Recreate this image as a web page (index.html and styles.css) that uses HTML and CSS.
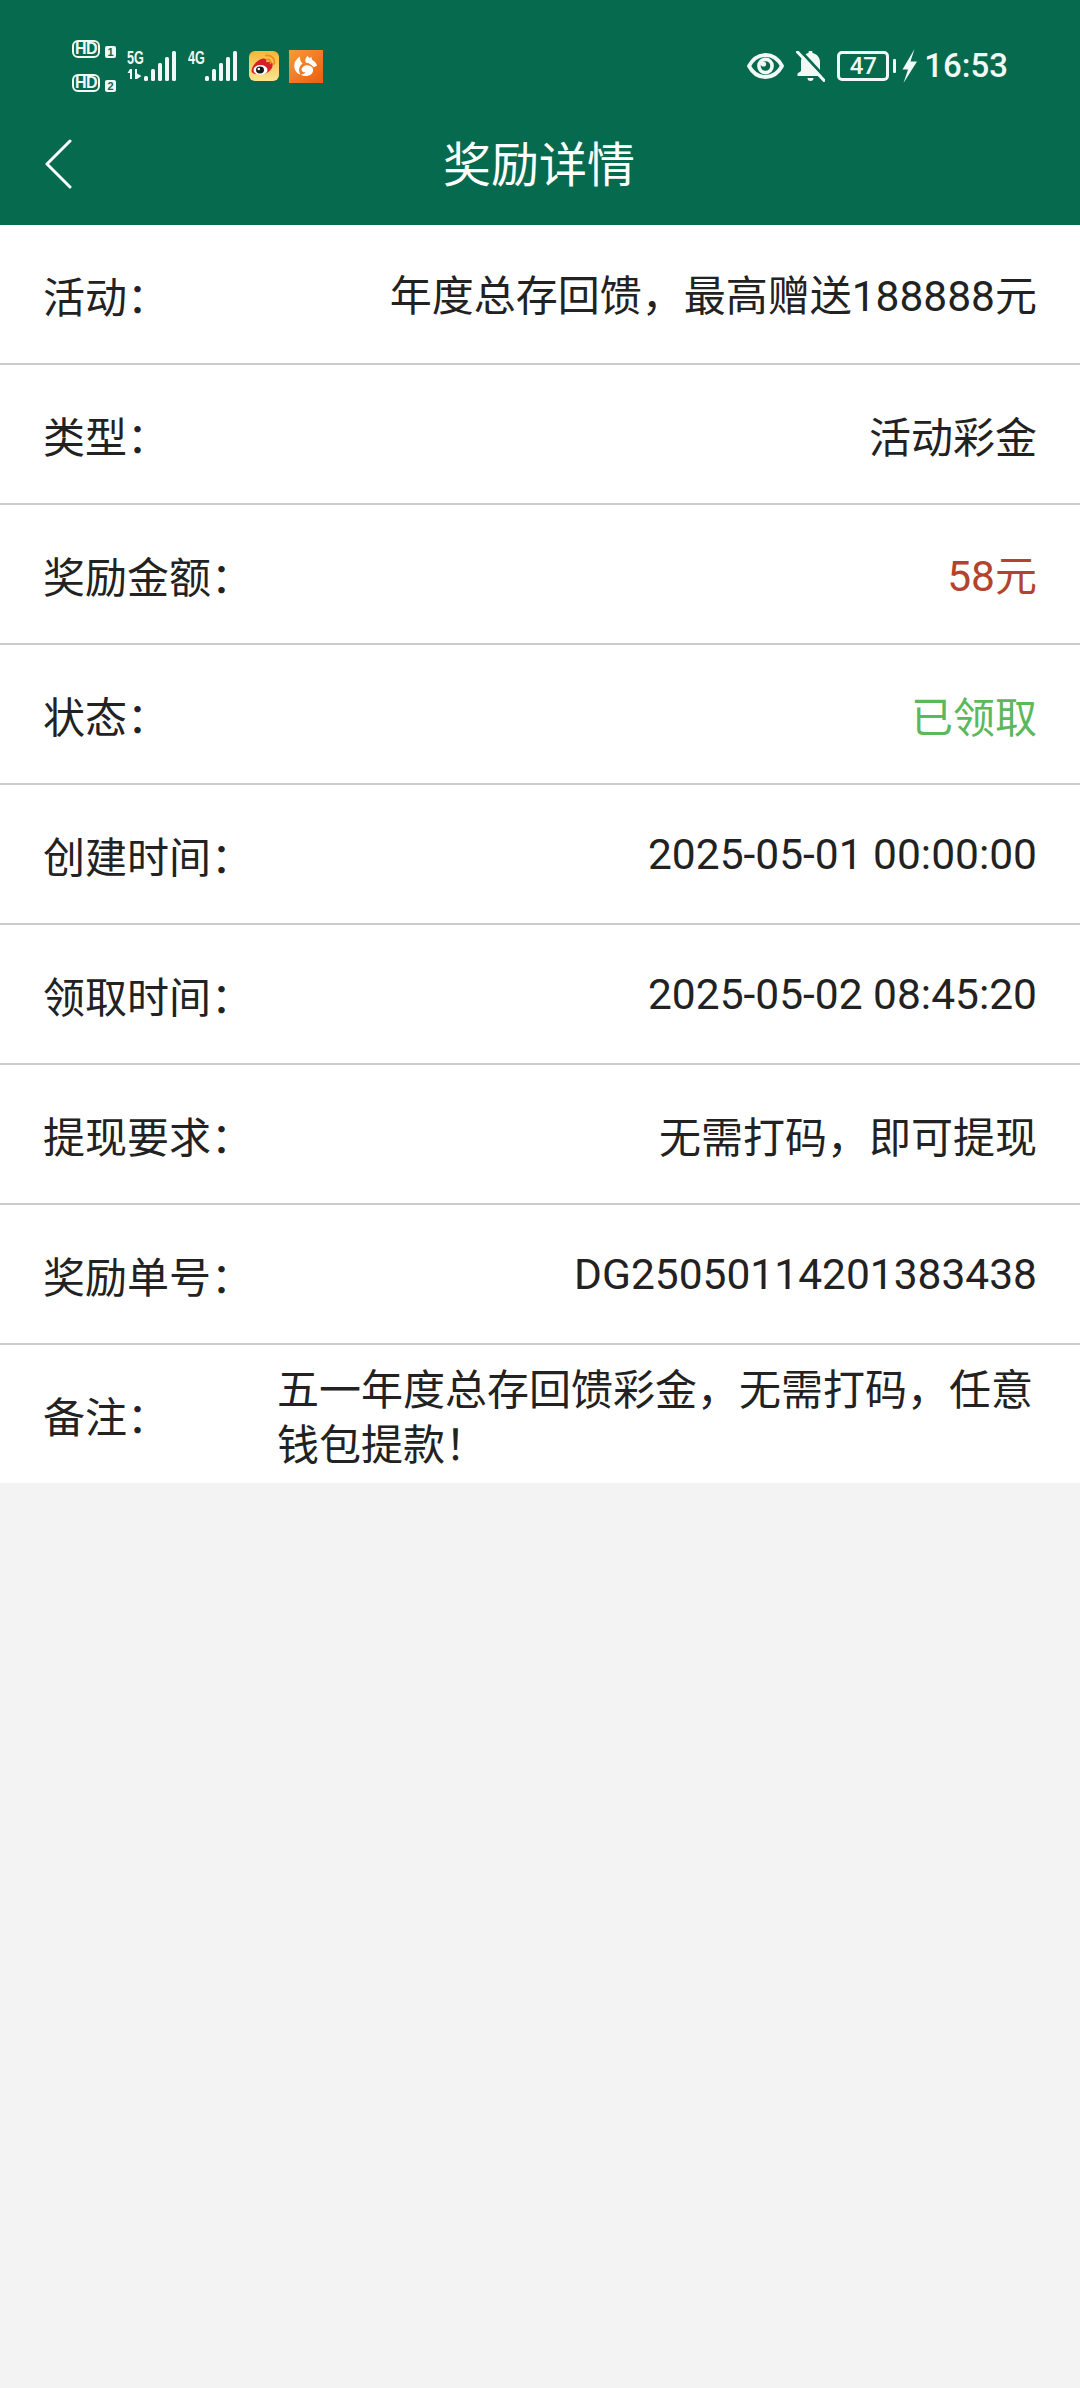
FILE: index.html
```html
<!DOCTYPE html>
<html lang="zh-CN">
<head>
<meta charset="utf-8">
<title>奖励详情</title>
<link rel="stylesheet" href="styles.css">
</head>
<body>
<header class="top">
  <div class="status">
    <div class="status-left">
      <div class="hd-col">
        <div class="hd-row"><span class="hd">HD</span><span class="sim">1</span></div>
        <div class="hd-row"><span class="hd">HD</span><span class="sim">2</span></div>
      </div>
      <div class="net net-5g">
        <div class="net-label">
          <span class="net-text">5G</span>
          <svg class="arrows" width="15" height="10" viewBox="0 0 15 10"><path d="M3 0h2v10H3V4H0.500zM8 0h2v4.500L14.500 7 10 10H8z" fill="#f1f8f5"/></svg>
        </div>
        <svg class="bars" width="32" height="30" viewBox="0 0 32 30"><g fill="#f1f8f5"><rect x="0" y="25" width="4" height="5" rx="1.500"/><rect x="7" y="18" width="4" height="12" rx="1.500"/><rect x="14" y="12" width="4" height="18" rx="1.500"/><rect x="21" y="6" width="4" height="24" rx="1.500"/><rect x="28" y="0" width="4" height="30" rx="1.500"/></g></svg>
      </div>
      <div class="net net-4g">
        <div class="net-label"><span class="net-text">4G</span></div>
        <svg class="bars" width="32" height="30" viewBox="0 0 32 30"><g fill="#f1f8f5"><rect x="0" y="25" width="4" height="5" rx="1.500"/><rect x="7" y="18" width="4" height="12" rx="1.500"/><rect x="14" y="12" width="4" height="18" rx="1.500"/><rect x="21" y="6" width="4" height="24" rx="1.500"/><rect x="28" y="0" width="4" height="30" rx="1.500"/></g></svg>
      </div>
      <svg class="app-weibo" width="30" height="30" viewBox="0 0 30 30">
        <defs><linearGradient id="wbg" x1="0" y1="0" x2="0" y2="1"><stop offset="0" stop-color="#f9b53a"/><stop offset="1" stop-color="#fbe58f"/></linearGradient></defs>
        <rect width="30" height="30" rx="6" fill="url(#wbg)"/>
        <path d="M2.500 20c0-5 6-11.500 11.500-12.500 3-.5 4 1.300 3.200 3.800 3.200-1.200 6.500-.8 6.500 2.200 0 5.500-6 10-12 10-5 0-9.200-1-9.200-3.500z" fill="#d6202a"/>
        <ellipse cx="11.500" cy="19" rx="7" ry="5" fill="#fff"/>
        <ellipse cx="11" cy="19" rx="4" ry="3.400" fill="#1a1a1a"/>
        <circle cx="9.800" cy="18" r="1.300" fill="#fff"/>
        <path d="M17 4.500c5-1 9.500 3 8 8.500M18 8.500c2.500-.5 4.200 1.300 3.500 3.800" fill="none" stroke="#ee8f1c" stroke-width="1.800" stroke-linecap="round"/>
      </svg>
      <svg class="app-uc" width="34" height="33" viewBox="0 0 34 33">
        <defs><linearGradient id="ucg" x1="0" y1="0" x2="1" y2="1"><stop offset="0" stop-color="#f79a3c"/><stop offset="1" stop-color="#ea5f0e"/></linearGradient></defs>
        <rect width="34" height="33" fill="url(#ucg)"/>
        <path d="M11 6.500C7 9 4.500 13 5.500 18c.7 3.500 3.500 6 6 6.500-2-3-2-6.500 0-9 .5-.7 2-2 2-2-2-2-3-4.500-2.500-7z" fill="#fff"/>
        <path d="M18.500 5.500l1.500 2.500 2.500-1 .5 2.700c2.500 1.300 4.500 3.500 5 6l-3.500 1.500c-2.500-3-4.500-4.300-7.500-4.500-1.500-2 -.5-5 1.500-7z" fill="#fff"/>
        <path d="M12.500 20c.5-4 5-6 9-4 3 1.500 3.500 5.500 1 8-3 2.500-8 2.800-10.500 .5 2 0 4-1 4.500-2.500-1.500 .5-3 .5-4-2z" fill="#fff"/>
      </svg>
    </div>
    <div class="status-right">
      <svg class="eye" width="37" height="26" viewBox="0 0 37 26"><path d="M2 13C6 5.500 11.500 2 18.500 2s12.500 3.500 16.500 11c-4 7.500-9.500 11-16.500 11S6 20.500 2 13z" fill="none" stroke="#f1f8f5" stroke-width="3.800" stroke-linejoin="round"/><circle cx="18.500" cy="13" r="6.600" fill="none" stroke="#f1f8f5" stroke-width="3.600"/><circle cx="16.500" cy="11" r="2.600" fill="#f1f8f5"/></svg>
      <svg class="bell" width="29" height="31" viewBox="0 0 29 31"><path d="M5 11C5 6.500 8 3 12.500 2V1.500a2 2 0 0 1 4 0V2C21 3 24 6.500 24 11v9l3 2.500V25H1.500v-2.500L5 20z" fill="#f1f8f5"/><path d="M11.500 27h6a3 3 0 0 1-6 0z" fill="#f1f8f5"/><path d="M4.500 0 31 28.500" stroke="#066a4f" stroke-width="3"/><path d="M1.500 1l26.500 28.500" stroke="#f1f8f5" stroke-width="3" stroke-linecap="round"/></svg>
      <div class="battery"><span class="battery-level">47</span></div>
      <span class="battery-tip"></span>
      <svg class="bolt" width="15" height="34" viewBox="0 0 15 34"><path d="M12.500 0L.5 20.500h5.500L1.500 34 15 12.500H8.500z" fill="#f1f8f5"/></svg>
      <span class="clock">16:53</span>
    </div>
  </div>
  <nav class="nav">
    <svg class="back" width="28" height="50" viewBox="0 0 28 50"><path d="M26 2L3 25l23 23" fill="none" stroke="#fff" stroke-width="3" stroke-linecap="round" stroke-linejoin="round"/></svg>
    <h1 class="title">奖励详情</h1>
  </nav>
</header>
<main class="list">
  <div class="row"><span class="label">活动：</span><span class="value">年度总存回馈，最高赠送<span class="num">188888</span>元</span></div>
  <div class="row"><span class="label">类型：</span><span class="value">活动彩金</span></div>
  <div class="row"><span class="label">奖励金额：</span><span class="value value-red"><span class="num">58</span>元</span></div>
  <div class="row"><span class="label">状态：</span><span class="value value-green">已领取</span></div>
  <div class="row"><span class="label">创建时间：</span><span class="value num">2025-05-01 00:00:00</span></div>
  <div class="row"><span class="label">领取时间：</span><span class="value num">2025-05-02 08:45:20</span></div>
  <div class="row"><span class="label">提现要求：</span><span class="value">无需打码，即可提现</span></div>
  <div class="row"><span class="label">奖励单号：</span><span class="value num">DG25050114201383438</span></div>
  <div class="row row-note"><span class="label">备注：</span><span class="note">五一年度总存回馈彩金，无需打码，任意钱包提款！</span></div>
</main>
</body>
</html>
```
FILE: styles.css
```css
* { box-sizing: border-box; }
html, body { margin: 0; padding: 0; }
body {
  width: 1080px;
  height: 2388px;
  background: #f3f3f3;
  color: #222;
  font-family: "Noto Sans CJK SC", Roboto, sans-serif;
  overflow: hidden;
}
.top { background: #066a4f; color: #fff; height: 225px; }
.status {
  height: 100px;
  padding: 32px 72px 0 72px;
  display: flex;
  justify-content: space-between;
  align-items: center;
  color: #f1f8f5;
}
.status-left { display: flex; align-items: center; height: 68px; }
.hd-col { display: flex; flex-direction: column; gap: 16px; width: 55px; }
.hd-row { display: flex; align-items: flex-end; gap: 5px; height: 18px; }
.hd {
  width: 28px; height: 18px;
  border: 2.500px solid #f1f8f5; border-radius: 6px;
  color: #f1f8f5;
  font: 700 16px/13px "Liberation Sans", sans-serif;
  letter-spacing: -.5px;
  text-align: center;
}
.sim {
  width: 11px; height: 12px;
  border-radius: 2px; background: #f1f8f5; color: #066a4f;
  font: 700 11px/12px "Liberation Sans", sans-serif;
  text-align: center;
}
.net { display: flex; align-items: flex-end; height: 30px; }
.net-5g { width: 61px; }
.net-4g { width: 61px; }
.net-label { width: 17px; height: 30px; display: flex; flex-direction: column; gap: 4px; }
.net-text {
  font: 700 18px/14px "Liberation Sans", sans-serif;
  transform-origin: left top;
  transform: scaleX(.7);
  white-space: nowrap;
}
.status-left .bars { flex: none; }
.app-weibo { margin-right: 10px; flex: none; }
.app-uc { flex: none; }
.status-right { display: flex; align-items: center; height: 68px; }
.eye { margin-right: 12px; }
.bell { margin-right: 12px; }
.battery {
  width: 52px; height: 30px;
  border: 3px solid #f1f8f5; border-radius: 5px;
  display: flex; align-items: center; justify-content: center;
}
.battery-level { font: 500 24px/24px Roboto, sans-serif; }
.battery-tip { width: 3px; height: 14px; margin-left: 4px; background: #f1f8f5; border-radius: 1px; }
.bolt { margin-left: 6px; margin-right: 7px; }
.clock { font: 500 33px/40px Roboto, sans-serif; }

.nav { height: 125px; position: relative; display: flex; align-items: center; justify-content: center; }
.back { position: absolute; left: 44px; top: 39px; }
.title { margin: 0; font-size: 48px; font-weight: 400; line-height: 60px; color: #fff; transform: translate(-1px, -2px); }

.list { background: #fff; }
.row {
  height: 140px;
  padding: 0 43px;
  border-bottom: 2px solid #ccc;
  display: flex;
  justify-content: space-between;
  align-items: center;
  font-size: 42px;
  font-weight: 400;
  line-height: 55px;
}
.label { flex: none; white-space: nowrap; }
.value { white-space: nowrap; }
.num { font-family: Roboto, sans-serif; font-size: 42.500px; }
.value-red { color: #b3432f; }
.value-green { color: #5cb85c; }
.row-note { height: 138px; border-bottom: 0; justify-content: flex-start; }
.row-note .label { width: 234px; }
.note { width: 770px; }
```
